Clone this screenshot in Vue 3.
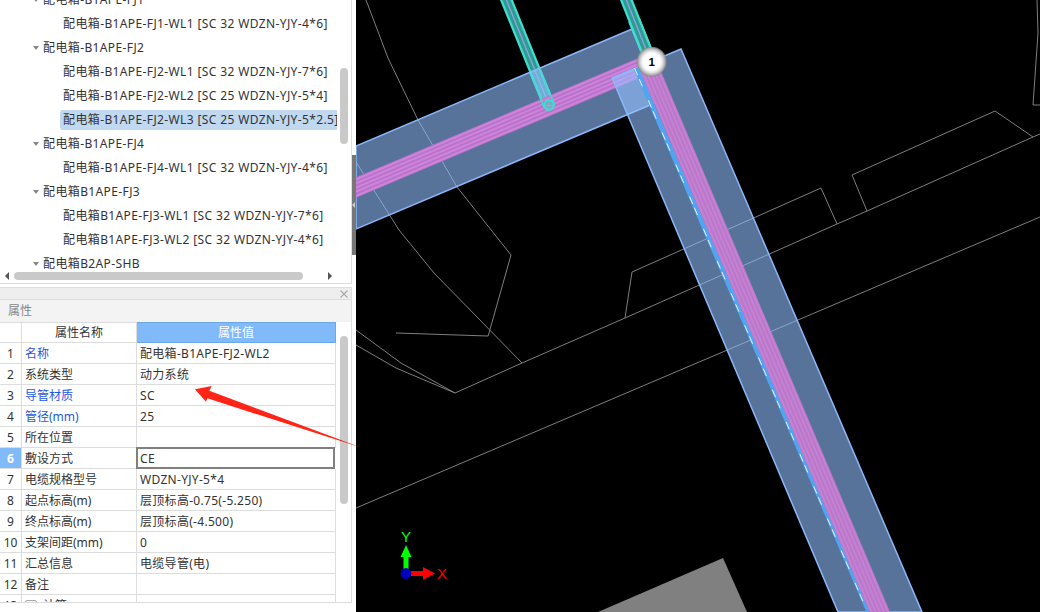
<script setup>
const tree = [
  { t: '配电箱-B1APE-FJ1', p: 1 },
  { t: '配电箱-B1APE-FJ1-WL1 [SC 32 WDZN-YJY-4*6]' },
  { t: '配电箱-B1APE-FJ2', p: 1 },
  { t: '配电箱-B1APE-FJ2-WL1 [SC 32 WDZN-YJY-7*6]' },
  { t: '配电箱-B1APE-FJ2-WL2 [SC 25 WDZN-YJY-5*4]' },
  { t: '配电箱-B1APE-FJ2-WL3 [SC 25 WDZN-YJY-5*2.5]', sel: 1 },
  { t: '配电箱-B1APE-FJ4', p: 1 },
  { t: '配电箱-B1APE-FJ4-WL1 [SC 32 WDZN-YJY-4*6]' },
  { t: '配电箱B1APE-FJ3', p: 1 },
  { t: '配电箱B1APE-FJ3-WL1 [SC 32 WDZN-YJY-7*6]' },
  { t: '配电箱B1APE-FJ3-WL2 [SC 32 WDZN-YJY-4*6]' },
  { t: '配电箱B2AP-SHB', p: 1 }
]
const rows = [
  ['名称', '配电箱-B1APE-FJ2-WL2', 1],
  ['系统类型', '动力系统'],
  ['导管材质', 'SC', 1],
  ['管径(mm)', '25', 1],
  ['所在位置', ''],
  ['敷设方式', 'CE', 0, 1],
  ['电缆规格型号', 'WDZN-YJY-5*4'],
  ['起点标高(m)', '层顶标高-0.75(-5.250)'],
  ['终点标高(m)', '层顶标高(-4.500)'],
  ['支架间距(mm)', '0'],
  ['汇总信息', '电缆导管(电)'],
  ['备注', ''],
  ['计算', '', 0, 0, 1]
]

function offset(a, b, d) {
  const dx = b[0] - a[0], dy = b[1] - a[1], l = Math.hypot(dx, dy)
  const nx = -dy / l * d, ny = dx / l * d
  return { x1: a[0] + nx, y1: a[1] + ny, x2: b[0] + nx, y2: b[1] + ny }
}
const hA = [340, 194.3], hB = [648, 64.2]
const vA = [645, 58], vB = [884, 622]
const stripeOffsets = [-7.6, -3.8, 0, 3.8, 7.6]
const hStripes = stripeOffsets.map(d => offset(hA, hB, d))
const vStripes = stripeOffsets.map(d => offset(vA, vB, d))
const pipes = [
  { a: [504, -6], b: [549, 105] },
  { a: [624, -6], b: [651, 62] }
]
const pipeEdges = [
  offset([535, 71], [549, 105], 5.3),
  offset([535, 71], [549, 105], -5.3),
  offset([634, 20], [651, 62], 5.3),
  offset([634, 20], [651, 62], -5.3)
]
const lines = [
  '366,0 388,58 418,120 457,187 511,255 489,333 488,336 396,333',
  '356,162 399,230 434,273 522,363',
  '356,330 401,363 455,393 522,363 625,318 632,272 821,188 837,224 867,211 852,175 995,111 1033,137 1040,134',
  '625,318 837,224',
  '867,211 1033,137',
  '356,345 396,368 455,393',
  '356,508 1040,217',
  '1037,0 1038,33 1033,105 1040,105'
]
</script>

<template>
  <div class="page">
    <div class="left">
      <section class="tree-panel">
        <div class="tree-main">
          <div class="tree">
            <div v-for="n in tree" :key="n.t" class="node" :class="{ parent: n.p, leaf: !n.p }">
              <i v-if="n.p" class="caret"></i>
              <span class="label" :class="{ selected: n.sel }">{{ n.t }}</span>
            </div>
          </div>
          <div class="vtrack tree-track"><div class="thumb tree-thumb"></div></div>
        </div>
        <div class="hbar">
          <i class="arrow-l"></i>
          <div class="hthumb"></div>
          <i class="arrow-r"></i>
        </div>
      </section>

      <section class="prop-panel">
        <div class="close-bar">
          <svg class="close" viewBox="0 0 8 8" width="8" height="8">
            <path d="M0.5 0.5 L7.5 7.5 M7.5 0.5 L0.5 7.5" stroke="#a8a8a8" stroke-width="1.1" fill="none" />
          </svg>
        </div>
        <div class="prop-title">属性</div>
        <div class="prop-body">
          <div class="grid">
            <div class="cell num head"></div>
            <div class="cell head name-head">属性名称</div>
            <div class="cell head val-head">属性值</div>
            <template v-for="(r, i) in rows" :key="r[0]">
              <div class="cell num" :class="{ 'num-active': r[3] }">{{ i + 1 }}</div>
              <div class="cell name" :class="{ blue: r[2] }">
                <i v-if="r[4]" class="plus"></i>{{ r[0] }}
              </div>
              <div class="cell value" :class="{ active: r[3] }">{{ r[1] }}</div>
            </template>
          </div>
          <div class="vtrack prop-track"><div class="thumb prop-thumb"></div></div>
        </div>
      </section>
    </div>

    <div class="splitter"><div class="handle"><i></i></div></div>

    <div class="canvas">
      <svg class="scene" viewBox="356 0 684 612" width="684" height="612">
        <defs>
          <radialGradient id="halo">
            <stop offset="0" stop-color="#ffffff" />
            <stop offset="0.58" stop-color="#fcfcff" />
            <stop offset="0.72" stop-color="#e2e2e6" />
            <stop offset="0.88" stop-color="#b0b0b0" />
            <stop offset="1" stop-color="#808080" stop-opacity="0.75" />
          </radialGradient>
        </defs>
        <polygon points="598,612 723,558 747,612" fill="#808080" />
        <polyline v-for="l in lines" :key="l" :points="l" fill="none" stroke="#7e7e7e" stroke-width="1" />

        <g v-for="(p, i) in pipes" :key="i">
          <line :x1="p.a[0]" :y1="p.a[1]" :x2="p.b[0]" :y2="p.b[1]" stroke="#3fdcd0" stroke-width="12" stroke-linecap="round" />
          <line :x1="p.a[0]" :y1="p.a[1]" :x2="p.b[0]" :y2="p.b[1]" stroke="#2f9b8e" stroke-width="7.5" stroke-linecap="round" />
          <line :x1="p.a[0]" :y1="p.a[1]" :x2="p.b[0]" :y2="p.b[1]" stroke="#8f9fe8" stroke-width="1.4" />
        </g>

        <polygon points="356,146 632,29 662,100 356,229" class="duct" />
        <line :x1="hA[0]" :y1="hA[1]" :x2="hB[0]" :y2="hB[1]" stroke="#b674c6" stroke-width="19" />
        <line v-for="(s, i) in hStripes" :key="i" v-bind="s" stroke="#d082de" stroke-width="2" />

        <polygon points="612,78 681,49 922,612 838,612" class="duct" />
        <line x1="636" y1="68" x2="869" y2="612" stroke="#4ea6f2" stroke-width="5" />
        <line x1="634.5" y1="68" x2="867.5" y2="612" stroke="#eaf4ff" stroke-width="1" stroke-dasharray="8 4 8 15" />
        <line :x1="vA[0]" :y1="vA[1]" :x2="vB[0]" :y2="vB[1]" stroke="#b878c8" stroke-width="19" />
        <line v-for="(s, i) in vStripes" :key="i" v-bind="s" stroke="#c680d4" stroke-width="2" />

        <line v-for="(e, i) in pipeEdges" :key="i" v-bind="e" stroke="#3fdcd0" stroke-width="1.8" />
        <circle cx="549" cy="105" r="4.8" fill="#7fa8c8" stroke="#3fdcd0" stroke-width="2.2" />
        <line x1="546.5" y1="105.5" x2="551.5" y2="105.5" stroke="#3fdcd0" stroke-width="1.2" />

        <circle cx="651.7" cy="61.7" r="15" fill="url(#halo)" />
        <text x="651.7" y="65.6" class="badge">1</text>

        <line x1="406" y1="574" x2="406" y2="553" stroke="#00ff00" stroke-width="5" />
        <polygon points="406,545 411.5,557 400.5,557" fill="#00ff00" />
        <line x1="406" y1="573.5" x2="424" y2="573.5" stroke="#ff0000" stroke-width="5" />
        <polygon points="435,573.5 423,567 423,580" fill="#ff0000" />
        <circle cx="406" cy="573.5" r="5.4" fill="#0000c0" />
        <text x="406" y="542" class="axis y">Y</text>
        <text x="442" y="579" class="axis x">X</text>
      </svg>
    </div>

    <svg class="callout" viewBox="0 0 1040 612" width="1040" height="612">
      <polygon points="195,389.3 211.7,386 209.3,390.7 361.7,447.7 207.3,398.3 206,401.7" fill="#ff2416" />
    </svg>
  </div>
</template>

<style>
html, body { margin: 0; background: #fff; }
</style>

<style scoped>
.page {
  position: relative;
  width: 1040px;
  height: 612px;
  display: flex;
  overflow: hidden;
  background: #fff;
  font-family: "Noto Sans", "Noto Sans CJK SC", sans-serif;
  font-size: 12px;
  letter-spacing: 0.3px;
  color: #333;
}
.left { width: 352px; flex: none; display: flex; flex-direction: column; }
.tree-panel {
  height: 284px;
  box-sizing: border-box;
  border-right: 1px solid #ddd;
  border-bottom: 1px solid #ddd;
  display: flex;
  flex-direction: column;
}
.tree-main { height: 272px; display: flex; overflow: hidden; }
.tree { width: 340px; flex: none; margin-top: -12px; overflow: hidden; letter-spacing: 0.38px; }
.node { height: 24px; display: flex; align-items: center; white-space: nowrap; }
.parent { padding-left: 33px; }
.leaf { padding-left: 60px; }
.caret {
  width: 0; height: 0; margin-right: 4px;
  border-left: 3.5px solid transparent;
  border-right: 3.5px solid transparent;
  border-top: 4px solid #888;
}
.label { line-height: 20px; }
.leaf .label { padding: 0 0 0 3px; }
.selected {
  width: 274px;
  flex: none;
  background: #c1d9f0;
  border-radius: 3px 0 0 3px;
  overflow: hidden;
}
.vtrack { width: 11px; flex: none; }
.thumb { width: 8px; background: #c9c9c9; border-radius: 4px; }
.tree-thumb { height: 76px; margin-top: 68px; }
.hbar { height: 11px; display: flex; align-items: flex-start; padding-left: 5px; }
.hthumb { width: 289px; height: 8px; margin-left: 5px; background: #c9c9c9; border-radius: 4px; }
.arrow-l, .arrow-r { width: 0; height: 0; border-top: 4px solid transparent; border-bottom: 4px solid transparent; }
.arrow-l { border-right: 4px solid #555; }
.arrow-r { margin-left: 25px; border-left: 4px solid #555; }

.prop-panel {
  height: 316px;
  margin-top: 3px;
  box-sizing: border-box;
  border: 1px solid #ddd;
  border-left: 0;
  display: flex;
  flex-direction: column;
  overflow: hidden;
}
.close-bar {
  height: 11px;
  background: #eeeeee;
  border-bottom: 1px solid #ddd;
  display: flex;
  justify-content: flex-end;
  align-items: center;
  padding-right: 3px;
}
.close { display: block; }
.prop-title {
  height: 22px;
  line-height: 21px;
  box-sizing: border-box;
  padding-left: 8px;
  background: #f3f3f3;
  color: #888;
  letter-spacing: 0;
}
.prop-body { display: flex; flex: 1; min-height: 0; overflow: hidden; }
.grid {
  width: 336px;
  flex: none;
  display: grid;
  grid-template-columns: 22px 115px 199px;
  grid-auto-rows: 21px;
  align-self: flex-start;
}
.cell {
  box-sizing: border-box;
  border-right: 1px solid #ddd;
  border-bottom: 1px solid #ddd;
  line-height: 22px;
  white-space: nowrap;
  overflow: hidden;
}
.head { text-align: center; border-top: 1px solid #ddd; line-height: 19px; letter-spacing: 0; }
.val-head { background: #80baf8; color: #fff; border-color: #6aa8ea; }
.num { text-align: center; letter-spacing: 0; }
.num-active { background: #80baf8; color: #fff; font-weight: 700; }
.name { padding-left: 3px; letter-spacing: 0; }
.blue { color: #2459e0; }
.value { padding-left: 3px; }
.active {
  margin: -1px 1px 0 -1px;
  border: 2px solid #808080;
  line-height: 19px;
  padding-left: 2px;
}
.plus {
  display: inline-block;
  box-sizing: border-box;
  width: 12px;
  height: 12px;
  border: 1px solid #aaa;
  border-radius: 2px;
  margin-right: 6px;
  vertical-align: -2px;
  background:
    linear-gradient(#888, #888) center / 6px 1px no-repeat,
    linear-gradient(#888, #888) center / 1px 6px no-repeat;
}
.prop-track { padding-left: 4px; }
.prop-thumb { height: 168px; margin-top: 14px; }

.splitter { width: 4px; flex: none; }
.handle {
  width: 4px;
  height: 100px;
  margin-top: 155px;
  background: #777;
  display: flex;
  align-items: center;
}
.handle i {
  width: 0; height: 0;
  border-top: 3px solid transparent;
  border-bottom: 3px solid transparent;
  border-right: 3px solid #ccc;
}
.canvas { flex: 1; background: #000; overflow: hidden; }
.scene { display: block; }
.duct { fill: #93bfff; fill-opacity: 0.6; stroke: #8ab8fb; stroke-width: 1.5; }
.badge { font-size: 11.5px; font-weight: 700; text-anchor: middle; fill: #000; font-family: "Liberation Sans", sans-serif; letter-spacing: 0; }
.axis { font-size: 15px; text-anchor: middle; font-family: "Liberation Sans", sans-serif; letter-spacing: 0; }
.axis.y { fill: #00ff00; }
.axis.x { fill: #ff0000; }
.callout { position: absolute; left: 0; top: 0; pointer-events: none; }
</style>
